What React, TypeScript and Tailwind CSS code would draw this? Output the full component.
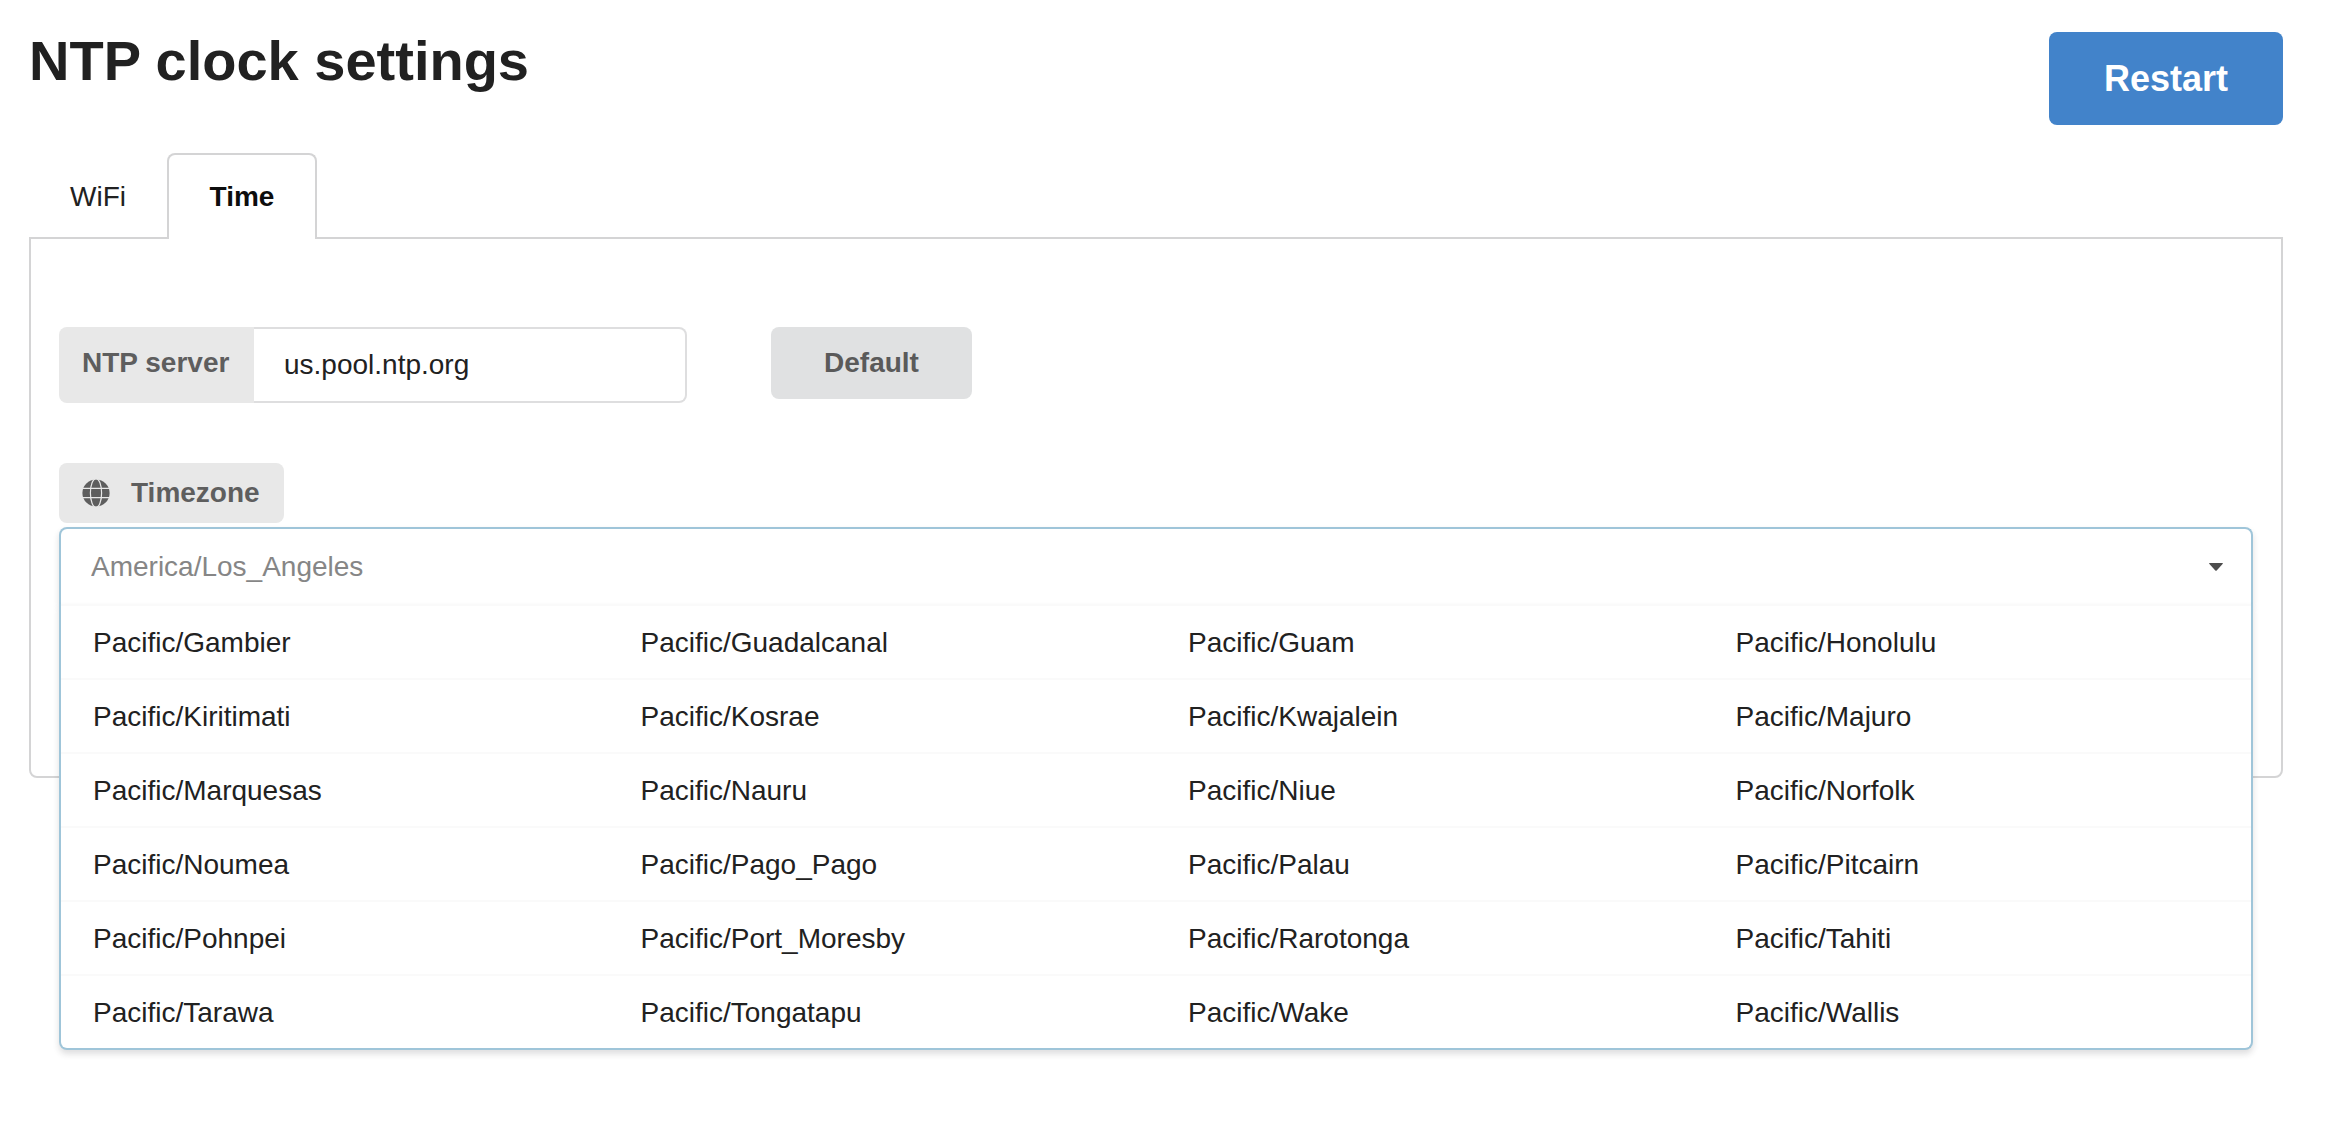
import { useState } from "react";

const zones = [
  "Pacific/Gambier", "Pacific/Guadalcanal", "Pacific/Guam", "Pacific/Honolulu",
  "Pacific/Kiritimati", "Pacific/Kosrae", "Pacific/Kwajalein", "Pacific/Majuro",
  "Pacific/Marquesas", "Pacific/Nauru", "Pacific/Niue", "Pacific/Norfolk",
  "Pacific/Noumea", "Pacific/Pago_Pago", "Pacific/Palau", "Pacific/Pitcairn",
  "Pacific/Pohnpei", "Pacific/Port_Moresby", "Pacific/Rarotonga", "Pacific/Tahiti",
  "Pacific/Tarawa", "Pacific/Tongatapu", "Pacific/Wake", "Pacific/Wallis",
];

function GlobeIcon() {
  return (
    <svg aria-hidden="true" viewBox="0 0 28 28" className="mr-[21px] size-7">
      <circle cx="14" cy="14" r="13.6" fill="#5e5e5e" />
      <g fill="none" stroke="#e8e8e8" strokeWidth="1.2">
        <ellipse cx="14" cy="14" rx="5.6" ry="14.4" />
        <path d="M0 9.3h28M0 18.6h28" />
      </g>
    </svg>
  );
}

function TimezonePicker() {
  const [zone, setZone] = useState("America/Los_Angeles");
  return (
    <div className="relative mt-1 rounded-t-lg border-2 border-b-0 border-[#9fc5d9] bg-white shadow-[0_4px_6px_rgba(34,36,38,0.15)]">
      <div className="flex items-center pr-7">
        <input
          id="timezone"
          role="combobox"
          aria-expanded="true"
          aria-controls="timezone-list"
          placeholder={zone}
          className="h-[75px] min-w-0 flex-1 bg-transparent pl-[30px] outline-none placeholder:text-[#868686]"
        />
        <svg aria-hidden="true" viewBox="0 0 14 8" className="h-2 w-3.5 fill-[#4d4d4d]">
          <path d="M0.6 0h12.8q0.6 0 0.4 0.8L7.7 7.4q-0.7 0.6-1.4 0L0.2 0.8Q0 0 0.6 0Z" />
        </svg>
      </div>
      <ul
        id="timezone-list"
        role="listbox"
        aria-label="Timezones"
        className="absolute inset-x-[-2px] top-full grid grid-cols-4 rounded-b-lg border-2 border-t-0 border-[#9fc5d9] bg-white shadow-[0_4px_6px_rgba(34,36,38,0.15)]"
      >
        {zones.map((name) => (
          <li key={name} role="option" aria-selected={name === zone} className="border-t-2 border-[#fafafa]">
            <button type="button" onClick={() => setZone(name)} className="w-full pt-[19px] pb-[17px] pl-8 text-left">
              {name}
            </button>
          </li>
        ))}
      </ul>
    </div>
  );
}

export default function App() {
  return (
    <main className="min-h-screen bg-white pr-[51px] pl-[29px] font-['Liberation_Sans',Arial,sans-serif] text-[28px] leading-9 text-[#212121]">
      <header className="flex items-start justify-between pt-6 pb-7">
        <h1 className="text-[56px] leading-[74px] font-bold">NTP clock settings</h1>
        <button type="button" className="mt-2 w-[234px] rounded-lg bg-[#4283ca] py-6 text-[36px] leading-[45px] font-bold text-white">
          Restart
        </button>
      </header>

      <div role="tablist" className="-mb-0.5 flex">
        <button type="button" role="tab" aria-selected="false" className="w-[138px] border-t-2 border-transparent py-6">
          WiFi
        </button>
        <button
          type="button"
          role="tab"
          aria-selected="true"
          className="z-10 w-[150px] rounded-t-lg border-2 border-b-0 border-[#d4d4d5] bg-white py-6 font-bold text-[#0d0d0d]"
        >
          Time
        </button>
      </div>

      <section role="tabpanel" className="rounded-b-lg border-2 border-[#d4d4d5] px-7 pt-22 pb-[172px]">
        <div className="flex items-start">
          <label htmlFor="ntp" className="h-[76px] w-[195px] rounded-l-lg bg-[#e8e8e8] py-[18px] pl-[23px] font-bold text-[#5e5e5e]">
            NTP server
          </label>
          <input
            id="ntp"
            defaultValue="us.pool.ntp.org"
            className="h-[76px] w-[433px] rounded-r-lg border-2 border-l-0 border-[#dededf] pl-[30px] outline-none"
          />
          <button type="button" className="ml-21 w-[201px] rounded-lg bg-[#e0e1e2] py-[18px] font-bold text-[#5a5a5a]">
            Default
          </button>
        </div>

        <label htmlFor="timezone" className="mt-15 flex w-[225px] items-center rounded-lg bg-[#e8e8e8] py-3 pl-[23px] font-bold text-[#5e5e5e]">
          <GlobeIcon />
          Timezone
        </label>
        <TimezonePicker />
      </section>
    </main>
  );
}
